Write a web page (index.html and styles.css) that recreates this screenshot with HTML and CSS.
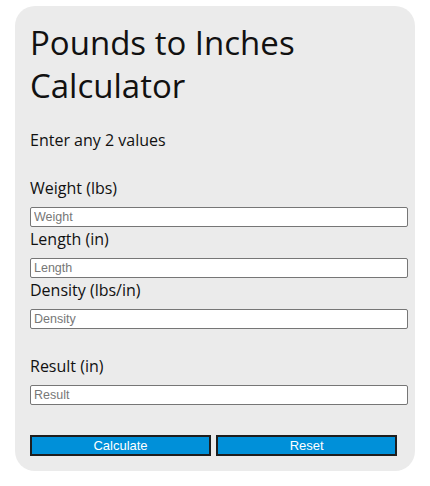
FILE: index.html
```html
<!DOCTYPE html>
<html lang="en">
<head>
    <meta charset="UTF-8">
    <meta name="viewport" content="width=device-width, initial-scale=1.0">
    <title>Pounds to Inches Calculator</title>
    <link rel="stylesheet" href="styles.css">
</head>
<body>
    <div class="calculator">
        <h1>Pounds to Inches Calculator</h1>
        <p class="hint">Enter any 2 values</p>

        <!-- Input fields -->
        <div class="fields">
            <label for="weight">Weight (lbs)</label>
            <input type="text" id="weight" placeholder="Weight">
            <label for="length">Length (in)</label>
            <input type="text" id="length" placeholder="Length">
            <label for="density">Density (lbs/in)</label>
            <input type="text" id="density" placeholder="Density">
        </div>

        <!-- Result -->
        <div class="fields result">
            <label for="result">Result (in)</label>
            <input type="text" id="result" placeholder="Result">
        </div>

        <div class="buttons">
            <button id="calculate">Calculate</button>
            <button id="reset">Reset</button>
        </div>
    </div>
</body>
</html>
```

FILE: styles.css
```css
/* CSS Styling */
body {
    font-family: "Open Sans", "Noto Sans", sans-serif;
    margin: 0;
    padding: 6px 0 0 15px;
    background-color: #fff;
    color: #111;
}

.calculator {
    width: 370px;
    padding: 15px;
    background-color: #ebebeb;
    border-radius: 20px;
}

.calculator h1 {
    font-size: 33px;
    font-weight: 400;
    line-height: 43px;
    margin: 0;
}

.hint {
    font-size: 16px;
    margin: 23px 0 26px;
    line-height: 20px;
}

.fields label {
    display: block;
    font-size: 16px;
    line-height: 20px;
    height: 29px;
    padding-top: 2px;
}

.fields input {
    display: block;
    box-sizing: border-box;
    width: 378px;
    height: 20px;
    margin: 0;
    padding: 1px 3px;
    border: 1px solid #767676;
    border-radius: 2px;
    font-family: "Liberation Sans", Arial, sans-serif;
    font-size: 12.5px;
    background: #fff;
}

.fields input::placeholder {
    color: #777;
}

.result {
    margin-top: 25px;
}

.buttons {
    margin-top: 28px;
}

button {
    box-sizing: border-box;
    width: 181px;
    height: 21px;
    margin-right: 1px;
    background-color: #0090d9;
    color: #fff;
    border: 2px solid #1e1e1e;
    font-family: "Liberation Sans", Arial, sans-serif;
    font-size: 13px;
    padding: 0;
    cursor: pointer;
}
```
